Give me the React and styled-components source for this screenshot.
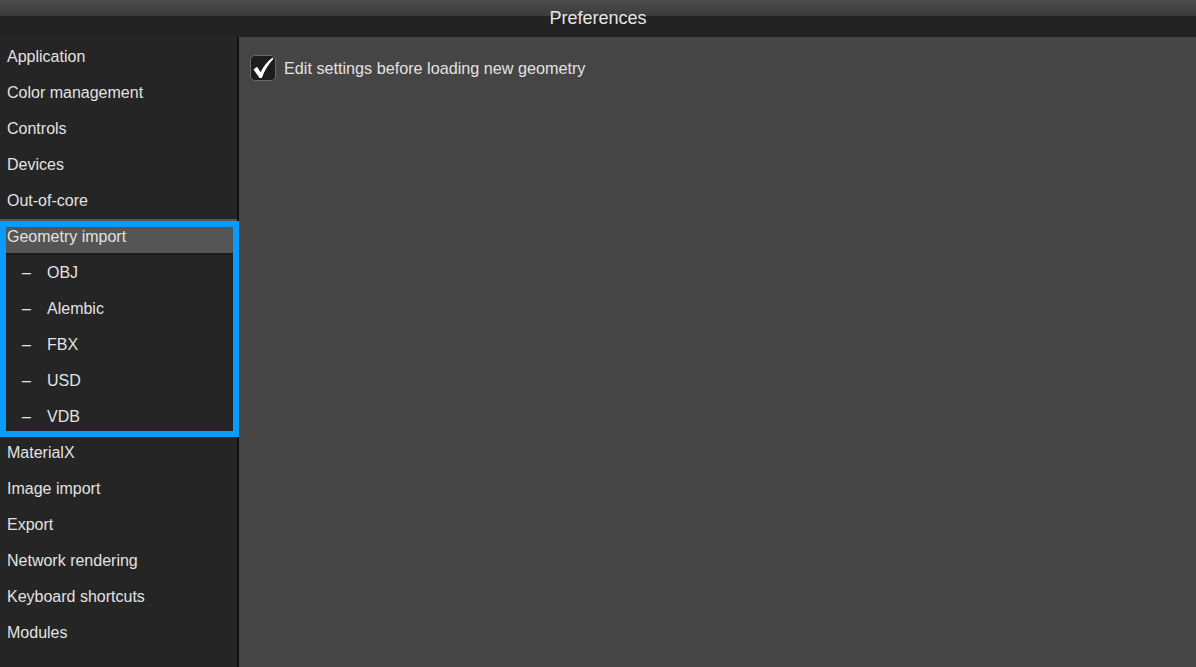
import React from "react";
import styled, { createGlobalStyle } from "styled-components";

const GlobalStyle = createGlobalStyle`
  html, body {
    margin: 0;
    padding: 0;
    background: #252525;
    font-family: "Liberation Sans", Arial, sans-serif;
  }
`;

const Window = styled.div`
  display: flex;
  flex-direction: column;
  height: 100vh;
  overflow: hidden;
`;

const TitleBar = styled.div`
  height: 37px;
  line-height: 37px;
  text-align: center;
  font-size: 18px;
  color: #e6e6e6;
  background: linear-gradient(
    to bottom,
    #4c4c4c 0px,
    #3b3b3b 16px,
    #222222 16px,
    #222222 100%
  );
`;

const Body = styled.div`
  flex: 1;
  display: flex;
  min-height: 0;
`;

const Sidebar = styled.div`
  width: 237px;
  padding-top: 2px;
  background: #252525;
  border-right: 2px solid #121212;
  display: flex;
  flex-direction: column;
`;

const Item = styled.div`
  height: ${({ $active }) => ($active ? "33px" : "36px")};
  padding-top: ${({ $active }) => ($active ? "1px" : "0")};
  padding-left: ${({ $sub }) => ($sub ? "22px" : "7px")};
  display: flex;
  align-items: center;
  font-size: 16px;
  color: #e2e2e2;
  white-space: nowrap;
  background: ${({ $active }) => ($active ? "#555555" : "transparent")};
  border-bottom: ${({ $active }) => ($active ? "2px solid #1b1b1b" : "none")};
`;

const Dash = styled.span`
  width: 25px;
`;

const Group = styled.div`
  position: relative;

  &::after {
    content: "";
    position: absolute;
    top: 2px;
    left: 0;
    right: -2px;
    bottom: -2px;
    border: 6px solid #0a9bff;
    pointer-events: none;
  }
`;

const Content = styled.div`
  flex: 1;
  background: #454545;
  padding: 18px 11px;
`;

const CheckRow = styled.label`
  display: flex;
  align-items: center;
  gap: 8px;
  font-size: 16.2px;
  color: #e2e2e2;
`;

const CheckBox = styled.span`
  width: 26px;
  height: 26px;
  box-sizing: border-box;
  border: 1px solid #6a6a6a;
  border-radius: 5px;
  background: #1c1c1c;
  display: flex;
  align-items: center;
  justify-content: center;
`;

const before = [
  "Application",
  "Color management",
  "Controls",
  "Devices",
  "Out-of-core",
];
const subs = ["OBJ", "Alembic", "FBX", "USD", "VDB"];
const after = [
  "MaterialX",
  "Image import",
  "Export",
  "Network rendering",
  "Keyboard shortcuts",
  "Modules",
];

export default function App() {
  return (
    <Window>
      <GlobalStyle />
      <TitleBar>Preferences</TitleBar>
      <Body>
        <Sidebar>
          {before.map((t) => (
            <Item key={t}>{t}</Item>
          ))}
          <Group>
            <Item $active>Geometry import</Item>
            {subs.map((t) => (
              <Item key={t} $sub>
                <Dash>–</Dash>
                {t}
              </Item>
            ))}
          </Group>
          {after.map((t) => (
            <Item key={t}>{t}</Item>
          ))}
        </Sidebar>
        <Content>
          <CheckRow>
            <CheckBox>
              <svg width="24" height="24" viewBox="0 0 24 24">
                <path
                  d="M2.5 13.5 L6 10.8 L9.6 16.2 C12.5 10.5 16 5.5 21.5 1.5 L22.5 2.8 C17.5 8 13.5 14.5 10.8 22 L8.6 22 Z"
                  fill="#ffffff"
                />
              </svg>
            </CheckBox>
            Edit settings before loading new geometry
          </CheckRow>
        </Content>
      </Body>
    </Window>
  );
}
